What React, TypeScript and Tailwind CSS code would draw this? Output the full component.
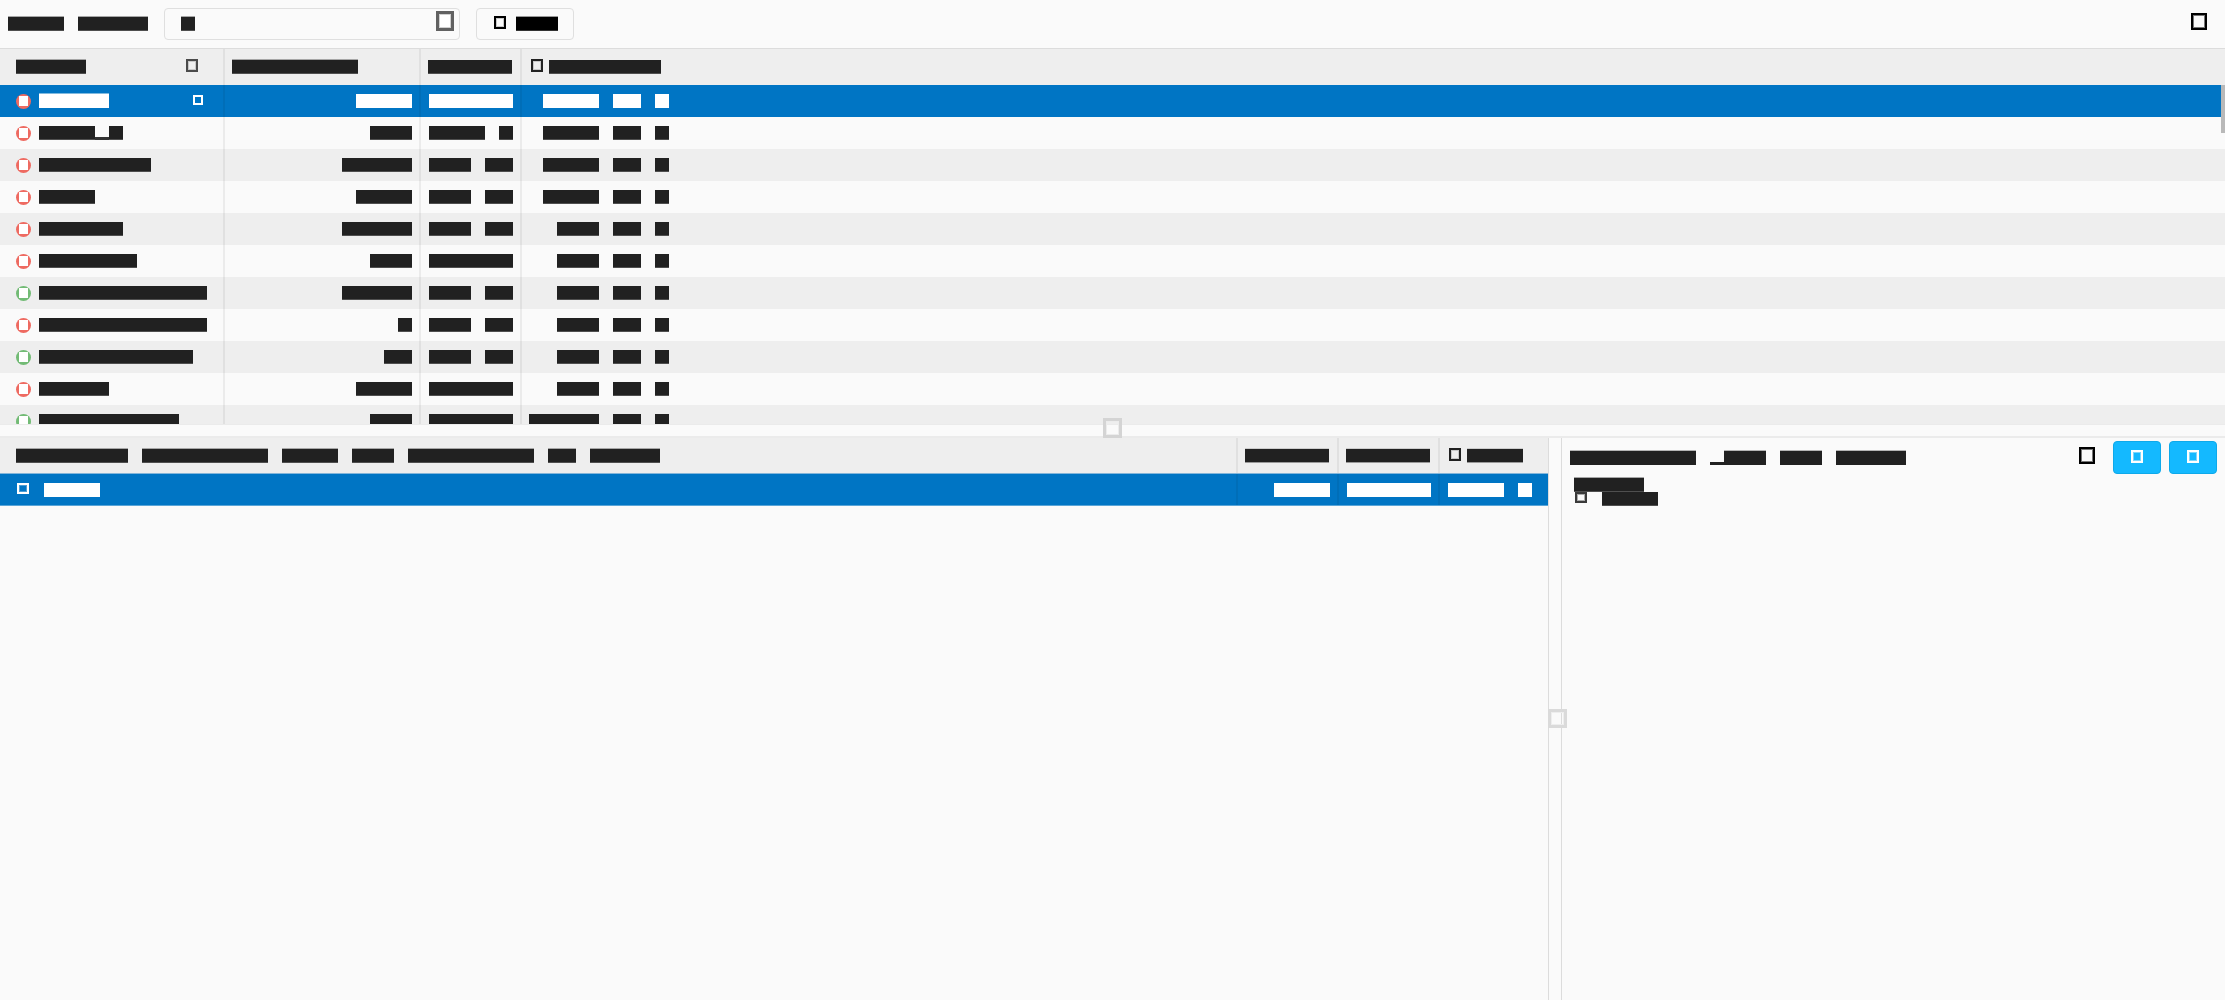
import React from "react";

const widths: Record<number, string> = {
  1: "w-[14px]", 2: "w-[28px]", 3: "w-[42px]", 4: "w-[56px]", 5: "w-[70px]", 6: "w-[84px]",
  7: "w-[98px]", 8: "w-[112px]", 9: "w-[126px]", 10: "w-[140px]", 11: "w-[154px]", 12: "w-[168px]",
};

const tones = {
  row: "h-[14px] bg-[#212121] border-b border-[#4f4f4f]",
  head: "h-[15px] bg-[#212121] border-y border-t-[#a6a6a6] border-b-[#4f4f4f]",
  flat: "h-[14px] bg-[#212121] border-b border-[#4f4f4f]",
  soft: "h-[15px] bg-[#212121] border-y border-t-[#cccccc] border-b-[#999999]",
  pane: "h-[15px] bg-[#212121] border-t border-t-[#b5b5b5]",
  black: "h-[15px] bg-black border-y border-t-[#999] border-b-[#333]",
  white: "h-[14px] bg-white",
  whiteTall: "h-[15px] bg-white border-t border-[#80badf]",
};
type Tone = keyof typeof tones;

function Bars({ n, tone = "row", className = "" }: { n: number[]; tone?: Tone; className?: string }) {
  return (
    <div className={`flex shrink-0 gap-[14px] ${className}`}>
      {n.map((c, i) => <span key={i} className={`shrink-0 ${widths[c]} ${tones[tone]}`} />)}
    </div>
  );
}

function Box({ className }: { className: string }) {
  return <span className={`block shrink-0 ${className}`} />;
}

function Status({ green = false }: { green?: boolean }) {
  return (
    <span className={`ml-4 mt-[0.5px] flex size-[15px] shrink-0 items-center justify-center rounded-full ${green ? "bg-[#72bb75]" : "bg-[#ee6a61]"}`}>
      <span className="h-[10px] w-[9px] bg-white" />
    </span>
  );
}

type Row = { name: number; size: number; date: number[]; last: number; green?: boolean };
const rows: Row[] = [
  { name: 5, size: 4, date: [6], last: 4 },
  { name: 0, size: 3, date: [4, 1], last: 4 },
  { name: 8, size: 5, date: [3, 2], last: 4 },
  { name: 4, size: 4, date: [3, 2], last: 4 },
  { name: 6, size: 5, date: [3, 2], last: 3 },
  { name: 7, size: 3, date: [6], last: 3 },
  { name: 12, size: 5, date: [3, 2], last: 3, green: true },
  { name: 12, size: 1, date: [3, 2], last: 3 },
  { name: 11, size: 2, date: [3, 2], last: 3, green: true },
  { name: 5, size: 4, date: [6], last: 3 },
  { name: 10, size: 3, date: [6], last: 5, green: true },
];

const line = "border-r-2 border-black/[0.06]";

function TableRow({ r, i }: { r: Row; i: number }) {
  const tone: Tone = i === 0 ? "white" : "row";
  const bg = i === 0 ? "bg-[#0075c4]" : i % 2 === 0 ? "bg-[#eeeeee]" : "bg-[#fafafa]";
  return (
    <div className={`flex h-8 shrink-0 ${bg}`}>
      <div className={`flex w-[225px] shrink-0 pt-2 ${line}`}>
        <Status green={r.green} />
        {r.name > 0 ? (
          <Bars n={[r.name]} tone={i === 0 ? "whiteTall" : "row"} className={i === 0 ? "ml-2" : "ml-2 mt-px"} />
        ) : (
          <div className="ml-2 mt-px flex h-[14px]">
            <Box className="h-[14px] w-[56px] border-b border-[#4f4f4f] bg-[#212121]" />
            <Box className="h-[14px] w-[14px] border-b-[3px] border-[#333] bg-[#fafafa]" />
            <Box className="h-[14px] w-[14px] border-b border-[#4f4f4f] bg-[#212121]" />
          </div>
        )}
        {i === 0 && <Box className="ml-[84px] mt-[2px] size-[10px] border-2 border-white" />}
      </div>
      <div className={`flex w-[196px] shrink-0 justify-end pr-[7px] pt-[9px] ${line}`}>
        <Bars n={[r.size]} tone={tone} />
      </div>
      <div className={`w-[101px] shrink-0 pl-2 pt-[9px] ${line}`}>
        <Bars n={r.date} tone={tone} />
      </div>
      <div className="flex w-[147px] shrink-0 justify-end pt-[9px]">
        <Bars n={[r.last, 2, 1]} tone={tone} />
      </div>
    </div>
  );
}

function ActionButton({ className }: { className: string }) {
  return (
    <div className={`flex h-[33px] w-12 justify-center rounded border border-[#0ea9ea] bg-[#14b9ff] pt-2 ${className}`}>
      <Box className="h-[13px] w-3 border-2 border-white shadow-[inset_0_0_0_1px_#7bd6fc]" />
    </div>
  );
}

export default function App() {
  return (
    <div className="flex h-[1000px] w-[2225px] flex-col overflow-hidden bg-[#fafafa]">
      <header className="flex h-[49px] shrink-0 border-b border-[#dcdcdc] pl-2 pr-[18px]">
        <Bars n={[4, 5]} tone="head" className="mt-4" />
        <div className="ml-4 mt-2 flex h-8 w-[296px] rounded border border-[#dfdfdf] pl-4 pr-[5px]">
          <Bars n={[1]} tone="head" className="mt-[7px]" />
          <Box className="ml-auto mt-[2px] h-5 w-[18px] border-[3px] border-[#616161] bg-white shadow-[inset_0_0_0_1px_#d0d0d0]" />
        </div>
        <div className="ml-4 mt-2 flex h-8 w-[98px] rounded border border-[#dfdfdf] pl-[17px]">
          <Box className="mt-[7px] h-[13px] w-3 border-2 border-black shadow-[inset_0_0_0_1px_#c8c8c8]" />
          <Bars n={[3]} tone="black" className="ml-[10px] mt-[7px]" />
        </div>
        <Box className="ml-auto mt-[13px] h-[17px] w-4 border-2 border-black shadow-[inset_0_0_0_1px_#777]" />
      </header>

      <section className="relative flex h-[375px] shrink-0 flex-col overflow-hidden">
        <div className="flex h-9 shrink-0 bg-[#eeeeee]">
          <div className={`flex w-[225px] shrink-0 pl-4 pt-[10px] ${line}`}>
            <Bars n={[5]} tone="head" />
            <Box className="ml-[100px] h-[13px] w-3 border-2 border-[#4a4a4a] shadow-[inset_0_0_0_1px_#c8c8c8]" />
          </div>
          <div className={`w-[196px] shrink-0 pl-[7px] pt-[10px] ${line}`}><Bars n={[9]} tone="head" /></div>
          <div className={`w-[101px] shrink-0 pl-[7px] pt-[11px] ${line}`}><Bars n={[6]} tone="flat" /></div>
          <div className="flex pl-[9px] pt-[10px]">
            <Box className="h-[13px] w-3 border-2 border-[#212121] shadow-[inset_0_0_0_1px_#c8c8c8]" />
            <Bars n={[8]} tone="flat" className="ml-[6px] mt-px" />
          </div>
        </div>
        {rows.map((r, i) => <TableRow key={i} r={r} i={i} />)}
        <Box className="absolute right-0 top-9 h-12 w-1 bg-[#b9b9b9]" />
      </section>

      <div className="relative h-[14px] shrink-0 border-b-2 border-t border-[#ebebeb]">
        <Box className="absolute left-[1103px] top-[-7px] z-10 h-5 w-[19px] border-[3px] border-[#d4d4d4] shadow-[inset_0_0_0_1px_#ececec]" />
      </div>

      <main className="flex min-h-0 flex-1">
        <section className="w-[1548px] shrink-0">
          <div className="flex h-[35px] bg-[#eeeeee]">
            <div className={`w-[1238px] shrink-0 pl-4 pt-[10px] ${line}`}><Bars n={[8, 9, 4, 3, 9, 2, 5]} tone="head" /></div>
            <div className={`w-[101px] shrink-0 pl-[7px] pt-[10px] ${line}`}><Bars n={[6]} tone="soft" /></div>
            <div className={`w-[101px] shrink-0 pl-[7px] pt-[10px] ${line}`}><Bars n={[6]} tone="soft" /></div>
            <div className="flex pl-[9px] pt-[10px]">
              <Box className="h-[13px] w-3 border-2 border-[#212121] shadow-[inset_0_0_0_1px_#c8c8c8]" />
              <Bars n={[4]} tone="soft" className="ml-[6px]" />
            </div>
          </div>
          <div className="flex h-[33px] border-y border-b-[#59a5d8] border-t-[#84b6da] bg-[#0075c4]">
            <div className={`flex w-[1238px] shrink-0 pt-[9px] ${line}`}>
              <Box className="ml-[17px] h-[11px] w-3 border-2 border-white shadow-[inset_0_0_0_1px_#4b9dd5]" />
              <Bars n={[4]} tone="white" className="ml-[15px]" />
            </div>
            <div className={`flex w-[101px] shrink-0 justify-end pr-[7px] pt-[9px] ${line}`}><Bars n={[4]} tone="white" /></div>
            <div className={`w-[101px] shrink-0 pl-2 pt-[9px] ${line}`}><Bars n={[6]} tone="white" /></div>
            <div className="pl-2 pt-[9px]"><Bars n={[4, 1]} tone="white" /></div>
          </div>
        </section>
        <div className="relative w-[14px] shrink-0 border-x border-[#dcdcdc]">
          <Box className="absolute left-[-1px] top-[271px] h-[19px] w-[19px] border-[3px] border-[#dadada] shadow-[inset_0_0_0_1px_#eeeeee]" />
        </div>
        <section className="flex-1">
          <div className="flex h-[38px] pl-2 pr-2 pt-[3px]">
            <Bars n={[9]} tone="pane" className="mt-[9px]" />
            <Box className="ml-[14px] mt-[21px] h-[3px] w-[14px] bg-[#212121]" />
            <Bars n={[3, 3, 5]} tone="pane" className="mt-[9px]" />
            <Box className="ml-auto mt-[6px] h-[17px] w-4 border-2 border-black shadow-[inset_0_0_0_1px_#777]" />
            <ActionButton className="ml-[18px]" />
            <ActionButton className="ml-2" />
          </div>
          <div className="pl-3 pt-px">
            <Bars n={[5]} tone="head" />
            <div className="flex pl-px">
              <Box className="h-[11px] w-3 border-2 border-[#3a3a3a] shadow-[inset_0_0_0_1px_#aaa]" />
              <Bars n={[4]} tone="row" className="ml-[15px]" />
            </div>
          </div>
        </section>
      </main>
    </div>
  );
}
